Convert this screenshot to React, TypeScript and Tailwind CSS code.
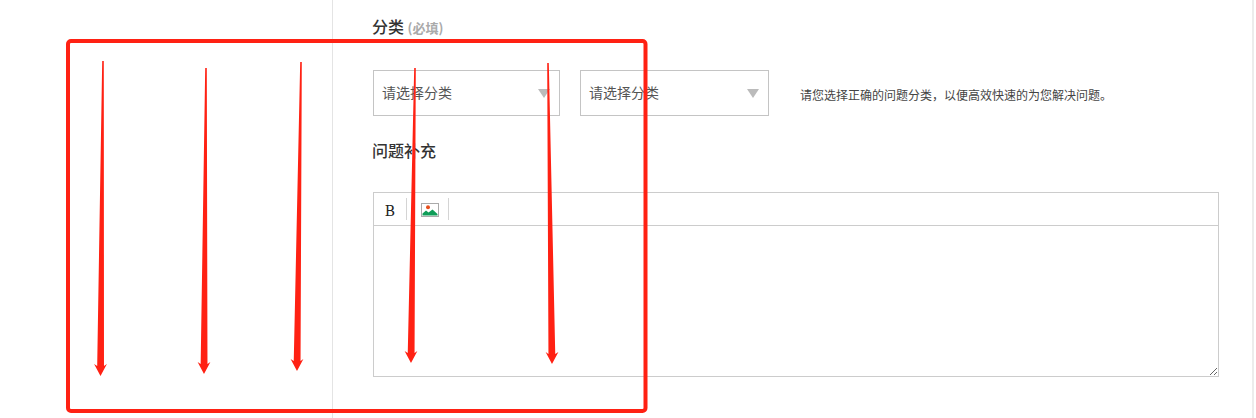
const font = "font-['Noto_Sans_CJK_SC','Liberation_Sans',sans-serif]";

const arrows = [
  { x1: 103, y1: 61, x2: 100.5, y2: 376 },
  { x1: 206, y1: 68, x2: 204, y2: 374 },
  { x1: 301, y1: 62, x2: 297, y2: 371 },
  { x1: 415, y1: 68, x2: 411, y2: 363 },
  { x1: 548, y1: 63, x2: 552, y2: 364 },
];

// tapered marker arrow: thin at the start, wide at the head
const arrowPoints = (a: { x1: number; y1: number; x2: number; y2: number }) => {
  const headY = a.y2 - 11;
  const neckX = a.x2 + (a.x1 - a.x2) * (11 / (a.y2 - a.y1));
  return [
    [a.x1 - 0.8, a.y1],
    [a.x1 + 0.8, a.y1],
    [neckX + 3.4, headY + 1],
    [a.x2 + 6.4, headY - 1],
    [a.x2, a.y2],
    [a.x2 - 6.4, headY - 1],
    [neckX - 3.4, headY + 1],
  ]
    .map((p) => p.join(","))
    .join(" ");
};

const CategorySelect = ({ size }: { size: string }) => (
  <div className={`${size} h-[46px] flex items-center justify-between pr-[9px] border border-[#c4c4c4] bg-white`}>
    <span className="text-sm text-[#555] pb-[2px]">请选择分类</span>
    <span className="w-0 h-0 border-x-[6.5px] border-x-transparent border-t-[9px] border-t-[#bbb]" />
  </div>
);

const App = () => {
  return (
    <div className={`relative w-[1256px] h-[418px] overflow-hidden bg-white flex ${font}`}>
      <div className="w-[333px] shrink-0 border-r border-[#e4e4e4]" />

      <div className="w-[921px] shrink-0 border-r-2 border-[#ececec] pl-[40px] pr-[33px]">
        <h2 className="h-[70px] pt-[14px] -ml-px text-base leading-6 font-medium text-[#333]">
          分类 <span className="text-[13px] font-bold text-[#aaa]">(必填)</span>
        </h2>

        <div className="flex items-center">
          <CategorySelect size="w-[187px] pl-2" />
          <div className="w-5" />
          <CategorySelect size="w-[189px] pl-2" />
          <p className="ml-[31px] pt-[4px] text-xs text-[#444]">
            请您选择正确的问题分类{"\uFF0C"}以便高效快速的为您解决问题。
          </p>
        </div>

        <h2 className="h-[76px] pt-[22px] -ml-px text-base leading-6 font-medium text-[#333]">问题补充</h2>

        <div className="border border-[#cccccc]">
          <div className="h-[33px] flex items-center border-b border-[#cccccc]">
            <button className="w-[33px] h-[22px] pt-[2px] border-r border-[#d4d4d4] font-['DejaVu_Serif',serif] text-sm leading-[22px] font-normal text-[#222]">
              B
            </button>
            <div className="w-[42px] h-[22px] flex items-center justify-center pl-[4px] pt-[1px] border-r border-[#d4d4d4]">
              <svg width="18" height="14" viewBox="0 0 18 14">
                <rect x="0.5" y="0.5" width="17" height="13" fill="#fff" stroke="#aaa" />
                <circle cx="7" cy="4.2" r="2" fill="#e8501e" />
                <path d="M1.5 12.5 V10.5 L5 7.5 L7.5 9.5 L11.5 6.5 L16.5 11 V12.5 Z" fill="#0f9d58" />
              </svg>
            </div>
          </div>
          <textarea className="block w-full h-[150px] outline-none bg-white" />
        </div>
      </div>

      {/* hand-drawn annotation on top of the page */}
      <svg className="absolute inset-0 pointer-events-none" width="1256" height="418" viewBox="0 0 1256 418">
        <rect x="68" y="41" width="577.5" height="370" rx="3" fill="none" stroke="#ff2113" strokeWidth="4" />
        {arrows.map((a) => (
          <polygon key={a.x1} points={arrowPoints(a)} fill="#ff2113" />
        ))}
      </svg>
    </div>
  );
};

export default App;
